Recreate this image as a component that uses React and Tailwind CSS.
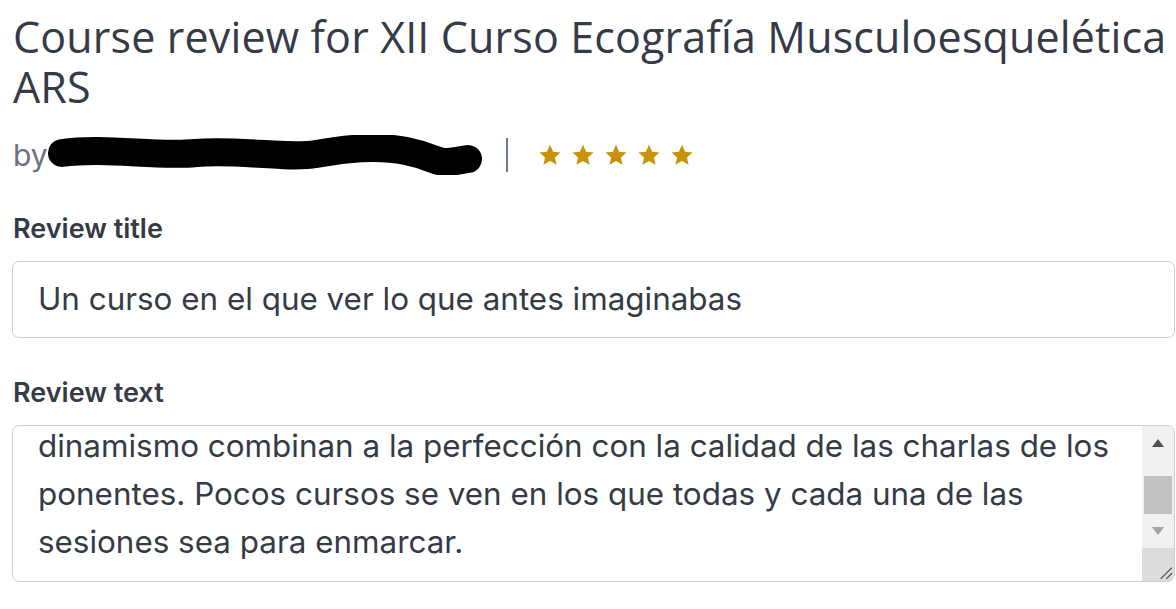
import React from "react";

function Star() {
  return (
    <svg viewBox="0 0 24 24" className="h-[24px] w-[24px]" fill="#c8920b">
      <path d="M12 1.8l3.1 6.9 7.4.7-5.6 5 1.7 7.4L12 17.9l-6.6 3.9 1.7-7.4-5.6-5 7.4-.7z" />
    </svg>
  );
}

function Scribble() {
  return (
    <svg viewBox="0 0 440 40" className="h-[40px] w-[440px] -ml-[2px]">
      <path
        d="M16 18 C 60 12, 110 22, 150 18 S 240 24, 270 19 S 330 10, 360 16 S 390 30, 410 26 L 422 24"
        stroke="#000"
        strokeWidth="28"
        strokeLinecap="round"
        fill="none"
      />
    </svg>
  );
}

export default function App() {
  return (
    <div className="min-h-screen bg-white pl-[13px] pr-[1px] pt-[12px] font-['Inter',sans-serif] text-[#343b46]">
      {/* Header */}
      <h1 className="font-['Open_Sans',sans-serif] text-[43px] leading-[50px] font-normal tracking-[0.15px] text-[#343b46]">
        Course review for XII Curso Ecografía Musculoesquelética ARS
      </h1>

      <div className="mt-[21px] flex items-center h-[44px]">
        <span className="text-[30px] text-[#6b7280] leading-none">by</span>
        <Scribble />
        <div className="ml-[20px] h-[34px] w-[2px] bg-[#6b7a8c]" />
        <div className="ml-[30px] flex gap-[9px]">
          <Star />
          <Star />
          <Star />
          <Star />
          <Star />
        </div>
      </div>

      {/* Review title */}
      <label className="mt-[36px] block text-[27px] font-semibold leading-[32px] text-[#343b46]">
        Review title
      </label>
      <div className="mt-[16px] flex h-[77px] items-center rounded-[7px] border border-[#cdcdcd] pl-[25px] -ml-[1px]">
        <span className="text-[31.4px] text-[#343b46]">
          Un curso en el que ver lo que antes imaginabas
        </span>
      </div>

      {/* Review text */}
      <label className="mt-[39px] block text-[27px] font-semibold leading-[32px] text-[#343b46]">
        Review text
      </label>
      <div className="mt-[16px] flex h-[157px] overflow-hidden rounded-[7px] border border-[#cdcdcd] -ml-[1px]">
        <div className="flex-1 pl-[25px] text-[31.4px] leading-[48px] text-[#343b46]">
          <p className="-mt-[4px] whitespace-nowrap">
            dinamismo combinan a la perfección con la calidad de las charlas de los
            <br />
            ponentes. Pocos cursos se ven en los que todas y cada una de las
            <br />
            sesiones sea para enmarcar.
          </p>
        </div>
        <div className="flex w-[32px] flex-col bg-[#f1f1f1]">
          <div className="flex h-[34px] items-center justify-center">
            <svg viewBox="0 0 12 8" className="h-[8px] w-[14px]">
              <path d="M0 8 L6 0 L12 8 Z" fill="#505050" />
            </svg>
          </div>
          <div className="mx-[2px] mt-[16px] h-[39px] bg-[#c1c1c1]" />
          <div className="flex h-[34px] items-center justify-center">
            <svg viewBox="0 0 12 8" className="h-[8px] w-[14px]">
              <path d="M0 0 L12 0 L6 8 Z" fill="#a3a3a3" />
            </svg>
          </div>
          <div className="relative mt-auto h-[33px] bg-[#dcdcdc]">
            <svg viewBox="0 0 16 16" className="absolute bottom-[1px] right-[1px] h-[18px] w-[18px]">
              <path d="M15 5 L5 15 M15 10 L10 15" stroke="#555" strokeWidth="1.2" />
            </svg>
          </div>
        </div>
      </div>
    </div>
  );
}
